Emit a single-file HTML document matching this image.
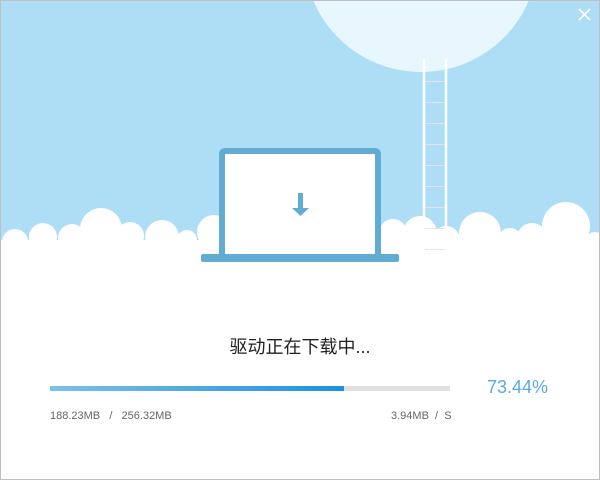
<!DOCTYPE html>
<html><head><meta charset="utf-8"><style>
body{margin:0;width:600px;height:480px;overflow:hidden;background:#fff;font-family:"Liberation Sans","Noto Sans CJK SC",sans-serif;position:relative}
.abs{position:absolute}
</style></head><body>
<svg class="abs" style="left:0;top:0" width="600" height="480">
<rect x="0" y="0" width="600" height="245" fill="#addef6"/>
<circle cx="421" cy="-45" r="117" fill="#e8f7fe"/>
<g fill="#fff">
<rect x="0" y="240" width="600" height="240"/>
<circle cx="15" cy="242" r="13"/><circle cx="43" cy="237" r="14"/><circle cx="72" cy="238" r="14"/>
<circle cx="101" cy="229" r="21"/><circle cx="130" cy="236" r="14"/><circle cx="162" cy="237" r="17"/>
<circle cx="187" cy="240" r="10"/><circle cx="214" cy="232" r="17"/>
<circle cx="393" cy="233" r="14"/><circle cx="420" cy="233" r="17"/><circle cx="446" cy="240" r="14"/>
<circle cx="480" cy="233" r="21"/><circle cx="510" cy="240" r="12"/><circle cx="532" cy="238" r="15"/>
<circle cx="566" cy="226" r="24"/><circle cx="595" cy="242" r="10"/>
</g>
<g stroke="#fff" stroke-width="2.5"><line x1="424" y1="59" x2="424" y2="248"/><line x1="446" y1="59" x2="446" y2="248"/></g>
<g stroke="#e2e6ea" stroke-width="1"><line x1="425" y1="81.5" x2="445" y2="81.5"/><line x1="425" y1="102.5" x2="445" y2="102.5"/><line x1="425" y1="123.5" x2="445" y2="123.5"/><line x1="425" y1="144.5" x2="445" y2="144.5"/><line x1="425" y1="165.5" x2="445" y2="165.5"/><line x1="425" y1="186.5" x2="445" y2="186.5"/><line x1="425" y1="207.5" x2="445" y2="207.5"/><line x1="425" y1="228.5" x2="445" y2="228.5"/><line x1="425" y1="249.5" x2="445" y2="249.5"/></g>
<rect x="222" y="151" width="156" height="106" rx="3" fill="#fff" stroke="#62acd3" stroke-width="6"/>
<rect x="201" y="254" width="198" height="8" rx="2" fill="#62acd3"/>
<rect x="298" y="193" width="5" height="16" fill="#62acd3"/>
<polygon points="292,208 309,208 300.5,216" fill="#62acd3"/>
<g stroke="#fff" stroke-width="1.6"><line x1="579" y1="9" x2="590" y2="20"/><line x1="590" y1="9" x2="579" y2="20"/></g>
<rect x="50" y="386" width="400" height="5" fill="#e0e0e0"/>
<defs><linearGradient id="g" x1="0" x2="1"><stop offset="0" stop-color="#7cc1e8"/><stop offset="1" stop-color="#1e90e0"/></linearGradient></defs>
<rect x="50" y="386" width="294" height="5" fill="url(#g)"/>
<rect x="0.5" y="0.5" width="599" height="479" fill="none" stroke="#bfbfbf"/>
</svg>
<div class="abs" style="left:0;width:600px;top:333px;text-align:center;font-size:18px;color:#222">驱动正在下载中...</div>
<div class="abs" style="left:487px;top:377px;font-size:18px;color:#5aa9e6">73.44%</div>
<div class="abs" style="left:50px;top:410px;font-size:11px;color:#666">188.23MB&nbsp;&nbsp;&nbsp;/&nbsp;&nbsp;&nbsp;256.32MB</div>
<div class="abs" style="left:391px;top:410px;font-size:11px;color:#666">3.94MB&nbsp;&nbsp;/&nbsp;&nbsp;S</div>
</body></html>
